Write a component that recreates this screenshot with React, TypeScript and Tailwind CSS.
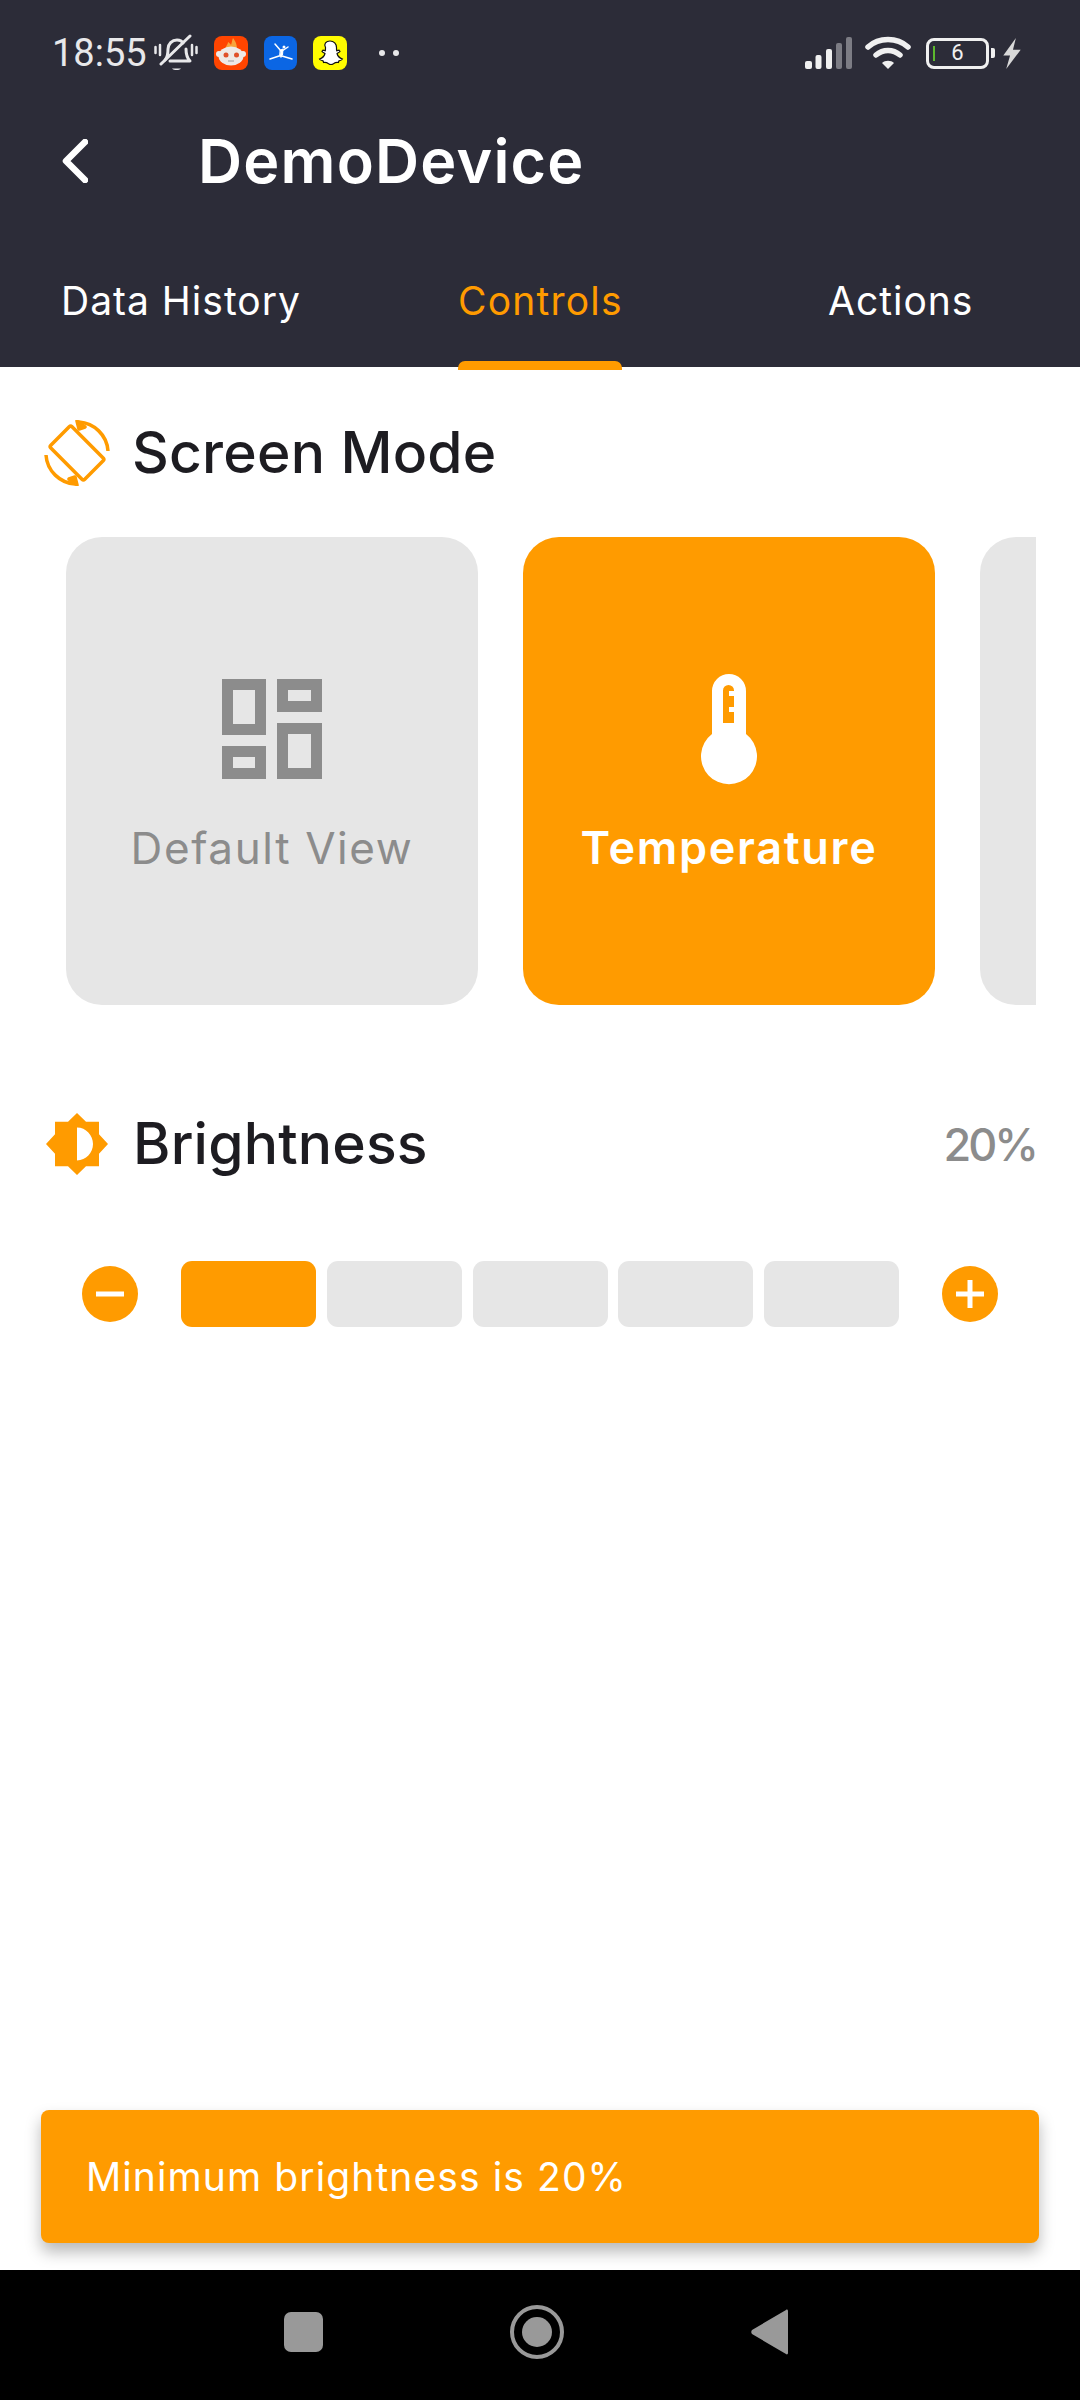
const ORANGE = "#ff9b00";

function BellOff() {
  return (
    <svg viewBox="0 0 44 38" className="w-[44px] h-[38px]" fill="none" stroke="#e8e8ea" strokeWidth="3" strokeLinecap="round" strokeLinejoin="round">
      <path d="M1.500 13v6M6 11v10M38 11v10M42.500 13v6" strokeWidth="2.500" />
      <path d="M11 26c3-3 3-7 3-11 0-5 4-9 9-9 3 0 5 1 6 3M32 15c0 4 0 8 4 12H16" />
      <path d="M7 30 36 2" />
      <path d="M18 34.500c2 2 7 2 9 0z" fill="#e8e8ea" stroke="none" />
    </svg>
  );
}

function RedditFire() {
  return (
    <div className="w-[34px] h-[34px] rounded-lg bg-[#ff4500] overflow-hidden">
      <svg viewBox="0 0 34 34" className="w-full h-full">
        <path d="M12 14c-1-4 2-5 2-8 1 1 2 1 3 3 1-3 1-5 2-7 2 3 4 5 4 12z" fill="#f7a43b" />
        <ellipse cx="5" cy="18" rx="3" ry="3" fill="#f1ebe8" />
        <ellipse cx="29" cy="18" rx="3" ry="3" fill="#f1ebe8" />
        <ellipse cx="17" cy="20" rx="12.500" ry="9.500" fill="#eee9e6" />
        <circle cx="12" cy="19" r="2.500" fill="#e0512a" />
        <circle cx="22.500" cy="19" r="2.500" fill="#e0512a" />
        <path d="M14 25h6" stroke="#9a9a9a" strokeWidth="1" />
      </svg>
    </div>
  );
}

function BlueApp() {
  return (
    <div className="w-[33px] h-[34px] rounded-lg bg-[#0b66e4]">
      <svg viewBox="0 0 33 34" className="w-full h-full" fill="none" stroke="#fff" strokeLinecap="round" strokeLinejoin="round">
        <path d="M11 8l6 7M24 11l-6 4-1 6" strokeWidth="1.500" />
        <path d="M6 23l9-3h3l10 3" strokeWidth="1.500" />
        <path d="M16.500 14l2.500-1-.5 6-2.500.5z" fill="#fff" strokeWidth="1" />
        <circle cx="20" cy="11" r="1.500" fill="#fff" stroke="none" />
      </svg>
    </div>
  );
}

function Snapchat() {
  return (
    <div className="w-[34px] h-[34px] rounded-lg bg-[#fffc00]">
      <svg viewBox="0 0 34 34" className="w-full h-full">
        <path
          d="M17 5c4 0 6.500 3 6.500 6.500 0 1.500 0 2.500.2 3.200l2.300-.5 1 1.300c-.8 1-2.500 1.300-3 2 .5 2 2.500 4.500 5.500 5.500-.2 1-2 1.500-3.500 1.800l-.6 1.700c-2.500-.5-4 .5-5 1.200-1.500 1-3.300 1-4.800 0-1-.7-2.500-1.700-5-1.200l-.6-1.700c-1.500-.3-3.300-.8-3.500-1.800 3-1 5-3.500 5.500-5.500-.5-.7-2.200-1-3-2l1-1.300 2.300.5c.2-.7.200-1.700.2-3.200C10.500 8 13 5 17 5z"
          fill="#fff"
          stroke="#111"
          strokeWidth="1.200"
        />
      </svg>
    </div>
  );
}

function StatusBar() {
  return (
    <div className="h-[90px] pt-[31px] pl-[52px] flex items-start font-['Roboto',sans-serif]">
      <span className="text-[38px] leading-[44px] text-[#e8e8ea] w-[102px] shrink-0">18:55</span>
      <div className="flex items-center h-[44px] gap-[16px]">
        <BellOff />
        <div className="flex gap-[16px]">
          <RedditFire />
          <BlueApp />
          <Snapchat />
        </div>
        <div className="flex gap-[8px] ml-[16px]">
          <span className="w-[6px] h-[6px] rounded-full bg-[#e8e8ea]" />
          <span className="w-[6px] h-[6px] rounded-full bg-[#e8e8ea]" />
        </div>
      </div>
      <div className="ml-auto mr-[58px] flex items-center h-[44px]">
        <svg viewBox="0 0 48 32" className="w-[48px] h-[32px]">
          <rect x="0" y="24" width="7" height="8" rx="2" fill="#f0f0f0" />
          <rect x="10.500" y="18" width="6" height="14" rx="2" fill="#f0f0f0" />
          <rect x="21" y="12" width="6" height="20" rx="2" fill="#f0f0f0" />
          <rect x="31" y="6" width="6" height="26" rx="2" fill="#7c7c84" />
          <rect x="41" y="0" width="6" height="32" rx="2" fill="#7c7c84" />
        </svg>
        <svg viewBox="0 0 46 34" className="w-[46px] h-[34px] ml-[12px]" fill="none" stroke="#f0f0f0" strokeWidth="5.500" strokeLinecap="round">
          <path d="M3 11c11-10 29-10 40 0" />
          <path d="M11 19c7-6 17-6 24 0" />
          <path d="M23 33l-6-6c3-3 9-3 12 0z" fill="#f0f0f0" stroke="none" />
        </svg>
        <div className="ml-[15px] w-[63px] h-[31px] rounded-[8px] border-[3px] border-[#f0f0f0] flex items-center relative">
          <span className="absolute left-[4px] top-[5px] w-[2px] h-[15px] bg-[#5cb82e]" />
          <span className="w-full text-center text-[22px] leading-none text-[#f0f0f0]">6</span>
        </div>
        <span className="ml-[2px] w-[4px] h-[10px] rounded-r-[2px] bg-[#f0f0f0]" />
        <svg viewBox="0 0 20 32" className="w-[20px] h-[31px] ml-[7px]">
          <path d="M14 0 1 18h7L4 32l15-20h-8z" fill="#d8d8d8" />
        </svg>
      </div>
    </div>
  );
}

function Header() {
  return (
    <header className="bg-[#2c2c38] h-[367px] flex flex-col font-['Inter',sans-serif]">
      <StatusBar />
      <div className="h-[70px] mt-[36px] flex items-center pl-[62px]">
        <svg viewBox="0 0 26 44" className="w-[26px] h-[44px]" fill="none" stroke="#fff" strokeWidth="6.500" strokeLinecap="round" strokeLinejoin="round">
          <path d="M23 3 4 22l19 19" />
        </svg>
        <h1 className="ml-[110px] text-[61px] leading-none font-semibold text-white tracking-[1.2px]">DemoDevice</h1>
      </div>
      <div className="flex-1 relative flex items-start pt-[80px] pl-[61px] text-[39px] leading-[50px]">
        <span className="text-white tracking-[1px] w-[397px]">Data History</span>
        <span className="text-[#ff9b00] tracking-[1.200px] w-[370px]">Controls</span>
        <span className="text-white tracking-[1px]">Actions</span>
        <span className="absolute left-[458px] bottom-[-3px] w-[164px] h-[9px] rounded-t-[7px] bg-[#ff9b00]" />
      </div>
    </header>
  );
}

function SectionTitle({ icon, title }: { icon: React.ReactNode; title: string }) {
  return (
    <div className="flex items-center">
      {icon}
      <h2 className="pb-[1px] text-[57px] leading-none font-medium text-[#1d1c21] tracking-[0.2px]">{title}</h2>
    </div>
  );
}

function ScreenRotation() {
  return (
    <svg viewBox="0 0 66 66" className="w-[66px] h-[66px] mr-[22px]" fill="none" stroke={ORANGE} strokeWidth="3.500" strokeLinejoin="round">
      <rect x="18" y="9" width="30" height="48" rx="2" transform="rotate(-45 33 33)" />
      <path d="M35 2c15 1 28 13 29 29" />
      <path d="M31 64C16 63 3 51 2 35" />
      <path d="M33 1l8 6-6 2z" fill={ORANGE} />
      <path d="M33 65l-8-6 6-2z" fill={ORANGE} />
    </svg>
  );
}

function GridIcon() {
  return (
    <svg viewBox="0 0 100 100" className="w-[100px] h-[100px]" fill="#8c8c8c" fillRule="evenodd">
      <path d="M0 0h44v56H0zM11 11v34h22V11z" />
      <path d="M55 0h45v33H55zM66 11v11h23V11z" />
      <path d="M55 44h45v56H55zM66 55v34h23V55z" />
      <path d="M0 67h44v33H0zM11 78v11h22V78z" />
    </svg>
  );
}

function Thermometer() {
  return (
    <svg viewBox="0 0 56 111" className="w-[56px] h-[111px]" fill="#fff" fillRule="evenodd">
      <path d="M11 60V17a17 17 0 0 1 34 0v43a28 28 0 1 1-34 0zM22 49V16.500a5.500 5.500 0 0 1 11 0V17h-5v5h5v11h-5v5h5v11z" />
    </svg>
  );
}

function SunIcon() {
  return (
    <svg viewBox="0 0 62 64" className="w-[62px] h-[62px] mr-[25px]" fill={ORANGE} fillRule="evenodd" preserveAspectRatio="none">
      <path d="M31 0l9 9h13v13l9 10-9 10v13H40l-9 9-9-9H9V42L0 32l9-10V9h13zM31 15v34c9 0 16-8 16-17s-7-17-16-17z" />
    </svg>
  );
}

function ModeCard({ label, active, icon }: { label: string; active?: boolean; icon: React.ReactNode }) {
  return (
    <div
      className={
        active
          ? "w-[412px] h-[468px] shrink-0 rounded-[36px] bg-[#ff9b00] text-white font-semibold flex flex-col items-center pt-[137px]"
          : "w-[412px] h-[468px] shrink-0 rounded-[36px] bg-[#e6e6e6] text-[#8c8c8c] flex flex-col items-center pt-[142px]"
      }
    >
      <div className={active ? "h-[111px]" : "h-[100px]"}>{icon}</div>
      <span className={active ? "mt-[38px] text-[45px] leading-[50px] tracking-[1.700px]" : "mt-[44px] text-[44px] leading-[50px] tracking-[1.600px]"}>
        {label}
      </span>
    </div>
  );
}

function StepButton({ plus }: { plus?: boolean }) {
  return (
    <span className="w-[56px] h-[56px] shrink-0 rounded-full bg-[#ff9b00] flex items-center justify-center">
      <svg viewBox="0 0 28 28" className="w-[28px] h-[28px]" fill="#fff">
        <rect x="0" y="11.500" width="28" height="5" />
        {plus && <rect x="11.500" y="0" width="5" height="28" />}
      </svg>
    </span>
  );
}

function BrightnessRow() {
  return (
    <div className="mt-[86px] flex items-center pl-[82px]">
      <StepButton />
      <div className="ml-[43px] flex gap-[10.8px]">
        {[1, 2, 3, 4, 5].map((n) => (
          <div key={n} className={n === 1 ? "w-[135px] h-[66px] rounded-[11px] bg-[#ff9b00]" : "w-[135px] h-[66px] rounded-[11px] bg-[#e6e6e6]"} />
        ))}
      </div>
      <span className="ml-[43px]">
        <StepButton plus />
      </span>
    </div>
  );
}

export default function App() {
  return (
    <div className="w-[1080px] h-[2400px] bg-white flex flex-col font-['Inter',sans-serif] overflow-hidden">
      <Header />

      <main className="flex-1 flex flex-col">
        {/* Screen mode */}
        <div className="mt-[53px] pl-[44px]">
          <SectionTitle icon={<ScreenRotation />} title="Screen Mode" />
        </div>
        <div className="mt-[51px] ml-[66px] w-[970px] flex gap-[45px] overflow-hidden">
          <ModeCard label="Default View" icon={<GridIcon />} />
          <ModeCard label="Temperature" active icon={<Thermometer />} />
          <ModeCard label="" icon={null} />
        </div>

        {/* Brightness */}
        <div className="mt-[108px] pl-[46px] pr-[44px] flex items-center justify-between">
          <SectionTitle icon={<SunIcon />} title="Brightness" />
          <span className="text-[45px] leading-none font-medium text-[#8c8c8c] tracking-[-3px]">20%</span>
        </div>
        <BrightnessRow />

        {/* Snackbar */}
        <div className="mt-auto mx-[41px] mb-[27px] h-[133px] w-[998px] rounded-[8px] bg-[#ff9b00] shadow-[0_9px_16px_rgba(0,0,0,0.28)] flex items-center pl-[45px]">
          <span className="text-[39px] leading-none text-white tracking-[1.100px]">Minimum brightness is 20%</span>
        </div>
      </main>

      {/* Navigation bar */}
      <nav className="h-[130px] bg-black flex items-start pt-[35px] pl-[284px]">
        <span className="mt-[7px] w-[39px] h-[40px] rounded-[7px] bg-[#999999]" />
        <span className="ml-[187px] w-[54px] h-[54px] rounded-full border-[4px] border-[#999999] flex items-center justify-center">
          <span className="w-[30px] h-[30px] rounded-full bg-[#999999]" />
        </span>
        <svg viewBox="0 0 37 46" className="ml-[187px] mt-[4px] w-[37px] h-[46px]">
          <path d="M35 1 1 21c-1 1-1 3 0 4l34 20c1 1 2 0 2-1V2c0-1-1-2-2-1z" fill="#999999" />
        </svg>
      </nav>
    </div>
  );
}
